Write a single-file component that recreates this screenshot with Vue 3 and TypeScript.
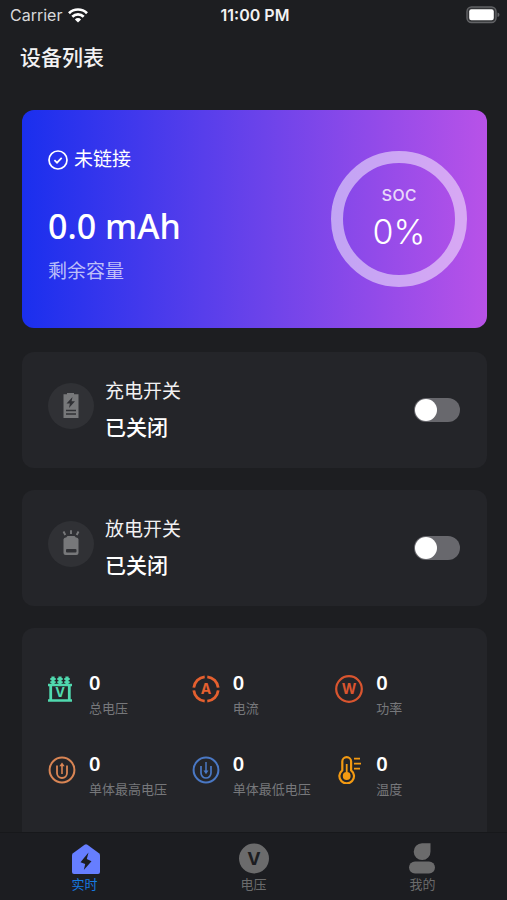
<script setup lang="ts">
import { reactive, ref } from 'vue'

interface PowerSwitch {
  id: 'charge' | 'discharge'
  name: string
  on: boolean
}
interface Metric {
  id: string
  value: number
  label: string
}
interface Tab {
  id: string
  label: string
}

const capacity = ref('0.0')
const soc = ref(0)

const switches = reactive<PowerSwitch[]>([
  { id: 'charge', name: '充电开关', on: false },
  { id: 'discharge', name: '放电开关', on: false },
])

const metrics: Metric[] = [
  { id: 'total', value: 0, label: '总电压' },
  { id: 'current', value: 0, label: '电流' },
  { id: 'power', value: 0, label: '功率' },
  { id: 'highest', value: 0, label: '单体最高电压' },
  { id: 'lowest', value: 0, label: '单体最低电压' },
  { id: 'temperature', value: 0, label: '温度' },
]

const tabs: Tab[] = [
  { id: 'live', label: '实时' },
  { id: 'voltage', label: '电压' },
  { id: 'mine', label: '我的' },
]
const activeTab = ref('live')
</script>

<template>
  <div class="screen">
    <header>
      <div class="status">
        <div class="carrier">
          <span>Carrier</span>
          <svg width="20" height="15" viewBox="0 0 20 15" fill="none" stroke="#fff" stroke-width="2.7">
            <path d="M1 5.2a12.8 12.8 0 0 1 18 0" />
            <path d="M4.3 8.7a8.1 8.1 0 0 1 11.4 0" />
            <path d="M10 14.5 6.9 11.4a4.4 4.4 0 0 1 6.2 0Z" fill="#fff" stroke="none" />
          </svg>
        </div>
        <time>11:00 PM</time>
        <svg class="battery" width="34" height="18" viewBox="0 0 34 18">
          <rect x="1" y="1" width="29" height="15.5" rx="4.5" fill="#333437" stroke="#626366" stroke-width="1.4" />
          <rect x="3.2" y="3.2" width="24.6" height="11" rx="2.2" fill="#fff" />
          <path d="M31.5 6.5q2 .6 2 2.3t-2 2.3Z" fill="#626366" />
        </svg>
      </div>
      <h1>设备列表</h1>
    </header>

    <main>
      <section class="hero">
        <div class="summary">
          <p class="link-state">
            <svg width="20" height="20" viewBox="0 0 20 20" fill="none" stroke="#fff" stroke-width="1.7">
              <circle cx="10" cy="10" r="9" />
              <path d="m6.4 10.2 2.6 2.5 4.7-4.9" />
            </svg>
            <span>未链接</span>
          </p>
          <p class="capacity">{{ capacity }} mAh</p>
          <p class="capacity-label">剩余容量</p>
        </div>
        <div class="gauge">
          <span class="gauge-label">soc</span>
          <span class="gauge-value">{{ soc }}%</span>
        </div>
      </section>

      <label v-for="item in switches" :key="item.id" class="switch-card">
        <span class="badge">
          <svg v-if="item.id === 'charge'" width="18" height="28" viewBox="0 0 18 28">
            <path d="M5 2.2V1h7v1.2h4.5V26h-15V2.2Z" fill="#77787a" />
            <path d="m10.5 5-6 6.5h3.4L7 16l6-6.8H9.6Z" fill="#303135" />
            <path d="M4 18.5h10M4 22h10" stroke="#303135" stroke-width="1.7" />
          </svg>
          <svg v-else width="18" height="28" viewBox="0 0 18 28">
            <path d="m1.5 1.500 1.800 3.500M9 .3v3.800M16.500 1.500l-1.800 3.500" stroke="#77787a" stroke-width="1.900" />
            <path d="M4.500 7.200Q4.800 6 6 6h6q1.200 0 1.500 1.200 3 .3 3 2V23q0 2-2 2h-11q-2 0-2-2V9.200q0-1.700 3-2Z" fill="#77787a" />
            <rect x="4" y="19" width="10.500" height="3.500" rx="1" fill="#303135" />
          </svg>
        </span>
        <span class="switch-text">
          <span class="switch-name">{{ item.name }}</span>
          <strong>{{ item.on ? '已开启' : '已关闭' }}</strong>
        </span>
        <input v-model="item.on" type="checkbox" role="switch" class="toggle" />
      </label>

      <section class="metrics">
        <div v-for="metric in metrics" :key="metric.id" class="metric">
          <svg v-if="metric.id === 'total'" class="metric-icon" viewBox="2 0 28 28" fill="none" stroke="#50d9ae">
            <path d="M2 10h24M2 25.500h24" stroke-width="2.400" />
            <path d="M4.700 10v15M23.300 10v15" stroke-width="2.800" />
            <path d="M7 1.500v8M14 1.500v8M21 1.500v8" stroke-width="3.200" />
            <path d="M4.300 4h5.400M4.300 7.200h5.400M11.300 4h5.400M11.300 7.200h5.400M18.300 4h5.400M18.300 7.200h5.400" stroke-width="1.800" />
            <text x="14" y="22" text-anchor="middle" font-size="13" fill="#50d9ae" stroke="none">V</text>
          </svg>
          <svg v-else-if="metric.id === 'current'" class="metric-icon" viewBox="0 0 28 28">
            <g fill="none" stroke="#e5602f" stroke-width="2.800">
              <path d="M15.300 1.800A12.300 12.300 0 0 1 26.200 12.700M26.200 15.300A12.300 12.300 0 0 1 15.300 26.200M12.700 26.200A12.300 12.300 0 0 1 1.800 15.300M1.800 12.700A12.300 12.300 0 0 1 12.700 1.800" />
            </g>
            <text x="14" y="18.800" text-anchor="middle" font-size="14" fill="#e5602f">A</text>
          </svg>
          <svg v-else-if="metric.id === 'power'" class="metric-icon" viewBox="0 0 28 28">
            <circle cx="14" cy="14" r="12.800" fill="none" stroke="#d9552f" stroke-width="2.200" />
            <text x="14" y="19" text-anchor="middle" font-size="14" fill="#d9552f">W</text>
          </svg>
          <svg v-else-if="metric.id === 'highest'" class="metric-icon" viewBox="0 0 28 28" fill="none" stroke="#d98554">
            <circle cx="14" cy="14" r="12.400" stroke-width="2" />
            <path d="M9 9.500v7.500a5 5 0 0 0 10 0V9.500" stroke-width="1.800" />
            <path d="M14 8v10" stroke-width="1.600" />
            <path d="m11.300 10.200 2.700-3.700 2.700 3.700Z" fill="#d98554" stroke="none" />
          </svg>
          <svg v-else-if="metric.id === 'lowest'" class="metric-icon" viewBox="0 0 28 28" fill="none" stroke="#4a78c4">
            <circle cx="14" cy="14" r="12.400" stroke-width="2" />
            <path d="M9 10v7a5 5 0 0 0 10 0v-7" stroke-width="1.700" />
            <path d="M14 6v10" stroke-width="1.500" />
            <path d="m11.500 14.500 2.500 3.700 2.500-3.700Z" fill="#4a78c4" stroke="none" />
          </svg>
          <svg v-else class="metric-icon" viewBox="-1 0 28 28" fill="none" stroke="#f39a12">
            <path d="M6.300 14.300V5.600a4.400 4.400 0 0 1 8.800 0v8.700a7.300 7.300 0 1 1-8.800 0Z" stroke-width="2.200" />
            <path d="M10.700 8v11" stroke-width="1.800" />
            <circle cx="10.700" cy="20" r="3.900" fill="#f39a12" stroke="none" />
            <path d="M18 2.700h6M18 7.700h7M18 12.700h6" stroke-width="1.800" />
          </svg>
          <div class="metric-text">
            <span class="metric-value">{{ metric.value }}</span>
            <span class="metric-label">{{ metric.label }}</span>
          </div>
        </div>
      </section>
    </main>

    <nav>
      <button
        v-for="tab in tabs"
        :key="tab.id"
        type="button"
        class="tab"
        :class="{ active: tab.id === activeTab }"
        @click="activeTab = tab.id"
      >
        <svg v-if="tab.id === 'live'" width="32" height="32" viewBox="0 0 32 32">
          <path d="M15.600 1.700q1.400-1 2.800 0L30 10.200q1 .8 1 2V29q0 2-2 2H5q-2 0-2-2V12.200q0-1.200 1-2Z" fill="#667eff" />
          <path d="m19.500 9.500-8 9.700 4.700 1.800-1.400 6 7.700-8.700-4.700-2.300Z" fill="#1c1d21" />
        </svg>
        <svg v-else-if="tab.id === 'voltage'" width="32" height="32" viewBox="0 0 32 32">
          <circle cx="16" cy="15.500" r="15" fill="#6b6b6c" />
          <text x="16" y="22" text-anchor="middle" font-size="18" fill="#1c1d21">V</text>
        </svg>
        <svg v-else width="32" height="32" viewBox="0 0 32 32" fill="#6b6b6c">
          <path d="M15 .3h8.500v8.200A8.400 8.400 0 1 1 15 .3Z" />
          <rect x="2" y="18.500" width="26" height="12" rx="6" />
        </svg>
        <span>{{ tab.label }}</span>
      </button>
    </nav>
  </div>
</template>

<style>
body {
  background: #1d1e21;
}
</style>

<style scoped>
.screen {
  height: 100vh;
  display: flex;
  flex-direction: column;
  overflow: hidden;
  background: #1d1e21;
  color: #f2f2f3;
  font-family: Inter, "Noto Sans CJK SC", sans-serif;
}
h1,
p {
  margin: 0;
}
svg {
  display: block;
  flex: none;
}
svg text {
  font-family: Inter, sans-serif;
  font-weight: 700;
}
.status {
  height: 30px;
  padding: 0 7px 0 10px;
  display: grid;
  grid-template-columns: 1fr auto 1fr;
  align-items: center;
  font-size: 16px;
}
.carrier {
  display: flex;
  align-items: center;
  gap: 6px;
  color: #d8d8da;
}
.status time {
  font-weight: 600;
}
.battery {
  justify-self: end;
}
h1 {
  padding: 12px 20px 0;
  font-size: 21px;
  line-height: 32px;
  font-weight: 500;
}
main {
  flex: 1;
  min-height: 0;
  overflow: hidden;
  padding: 36px 20px 0 22px;
}
.hero {
  display: flex;
  justify-content: space-between;
  align-items: center;
  height: 218px;
  margin-bottom: 24px;
  padding: 0 20px 0 26px;
  box-sizing: border-box;
  border-radius: 12px;
  background: linear-gradient(90deg, #1a2fee 0%, #6c43ea 52%, #b852e8 100%);
  color: #fff;
}
.summary {
  padding-bottom: 6px;
}
.link-state {
  display: flex;
  align-items: center;
  gap: 6px;
  font-size: 19px;
  line-height: 28px;
}
.capacity {
  margin-top: 30px;
  font-family: "Noto Sans", Inter, sans-serif;
  font-size: 34px;
  line-height: 44px;
  font-weight: 500;
}
.capacity-label {
  margin-top: 10px;
  font-size: 19px;
  line-height: 28px;
  color: rgba(255, 255, 255, 0.7);
}
.gauge {
  width: 136px;
  height: 136px;
  box-sizing: border-box;
  border: 12px solid rgba(255, 255, 255, 0.5);
  border-radius: 50%;
  display: flex;
  flex-direction: column;
  align-items: center;
  justify-content: center;
  gap: 2px;
}
.gauge-label {
  font-size: 21px;
  line-height: 24px;
  color: rgba(255, 255, 255, 0.8);
}
.gauge-value {
  font-size: 34px;
  line-height: 48px;
  font-weight: 300;
}
.switch-card {
  display: flex;
  align-items: center;
  height: 116px;
  margin-bottom: 22px;
  padding: 0 27px 0 26px;
  box-sizing: border-box;
  border-radius: 12px;
  background: #242529;
}
.badge {
  width: 46px;
  height: 46px;
  margin-bottom: 8px;
  border-radius: 50%;
  background: #303135;
  display: flex;
  align-items: center;
  justify-content: center;
}
.switch-text {
  flex: 1;
  margin-left: 11px;
  display: flex;
  flex-direction: column;
}
.switch-name {
  font-size: 19px;
  line-height: 36px;
}
.switch-text strong {
  font-size: 21px;
  line-height: 36px;
  font-weight: 500;
  color: #fff;
}
.toggle {
  appearance: none;
  width: 46px;
  height: 24px;
  margin: 0;
  padding: 1px;
  box-sizing: border-box;
  border-radius: 12px;
  background: #68686d;
  display: flex;
}
.toggle::before {
  content: "";
  width: 22px;
  height: 22px;
  border-radius: 50%;
  background: #fff;
}
.toggle:checked {
  background: #667eff;
  justify-content: flex-end;
}
.metrics {
  display: grid;
  grid-template-columns: repeat(3, 1fr);
  row-gap: 31px;
  padding: 41px 8px 48px 26px;
  border-radius: 12px;
  background: #242529;
}
.metric {
  display: flex;
  align-items: center;
  gap: 13px;
}
.metric-icon {
  width: 28px;
  height: 28px;
  margin-bottom: 10px;
}
.metric-text {
  display: flex;
  flex-direction: column;
}
.metric-value {
  font-family: "Noto Sans", Inter, sans-serif;
  font-size: 20px;
  line-height: 28px;
  font-weight: 600;
  color: #fff;
}
.metric-label {
  font-size: 13px;
  line-height: 22px;
  color: #77787b;
  white-space: nowrap;
}
nav {
  display: flex;
  height: 68px;
  box-sizing: border-box;
  border-top: 1px solid #17181b;
  background: #1c1d21;
}
.tab {
  flex: 1;
  padding: 10px 0 0;
  border: 0;
  background: none;
  display: flex;
  flex-direction: column;
  align-items: center;
  font: 13px/18px Inter, "Noto Sans CJK SC", sans-serif;
  color: #6b6b6c;
}
.tab.active {
  color: #167be0;
}
</style>
